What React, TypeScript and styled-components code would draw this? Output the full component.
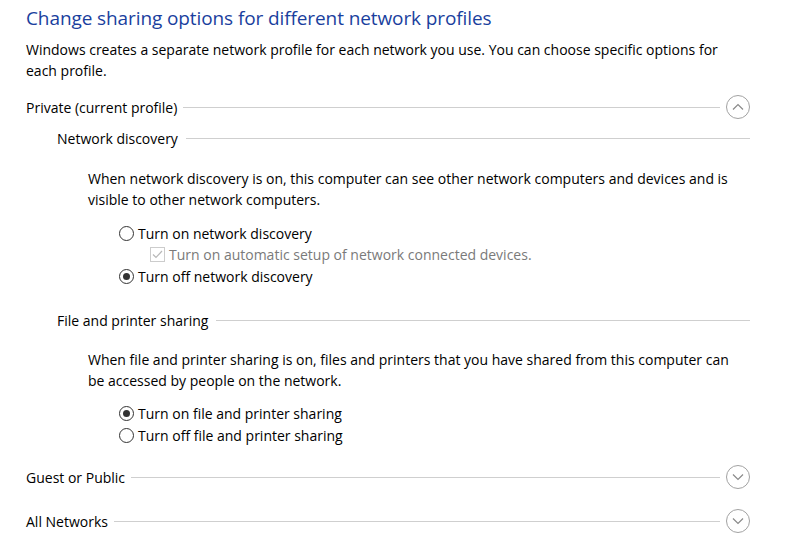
import React, { useState } from "react";
import styled, { createGlobalStyle } from "styled-components";

const GlobalStyle = createGlobalStyle`
  html, body {
    margin: 0;
    padding: 0;
    background: #ffffff;
  }
  body {
    font-family: "Open Sans", "Noto Sans", "Liberation Sans", sans-serif;
    color: #000000;
  }
`;

const Page = styled.div`
  width: 810px;
  height: 556px;
  box-sizing: border-box;
  padding: 5px 60px 0 26px;
  overflow: hidden;
`;

const Title = styled.h1`
  margin: 0;
  font-size: 19px;
  font-weight: 400;
  line-height: 26px;
  color: #1a3f9e;
  letter-spacing: -0.1px;
`;

const Paragraph = styled.p<{ $indent?: number; $top?: number; $width?: number }>`
  margin: ${(p) => p.$top ?? 8}px 0 0 ${(p) => p.$indent ?? 0}px;
  font-size: 14px;
  line-height: 21px;
  max-width: ${(p) => p.$width ?? 710}px;
`;

const HeaderRow = styled.div<{ $top: number }>`
  display: flex;
  align-items: center;
  gap: 6px;
  height: 24px;
  margin-top: ${(p) => p.$top}px;
  font-size: 14px;
`;

const SubHeaderRow = styled.div<{ $top: number }>`
  display: flex;
  align-items: center;
  gap: 8px;
  height: 21px;
  margin: ${(p) => p.$top}px 0 0 31px;
  font-size: 14px;
`;

const Rule = styled.div`
  flex: 1;
  height: 1px;
  background: #cfcfcf;
`;

const Toggle = styled.button`
  width: 24px;
  height: 24px;
  padding: 0;
  border: 1px solid #a2a2a2;
  border-radius: 50%;
  background: #ffffff;
  display: flex;
  align-items: center;
  justify-content: center;
  cursor: pointer;
`;

const Options = styled.div<{ $top: number }>`
  display: flex;
  flex-direction: column;
  margin: ${(p) => p.$top}px 0 0 93px;
`;

const OptionRow = styled.label<{ $indent?: number; $disabled?: boolean; $h?: number }>`
  display: flex;
  align-items: center;
  gap: 4px;
  height: ${(p) => p.$h ?? 22}px;
  margin-left: ${(p) => p.$indent ?? 0}px;
  font-size: 14px;
  color: ${(p) => (p.$disabled ? "#7a7a7a" : "#000000")};
`;

const RadioCircle = styled.span<{ $checked: boolean }>`
  width: 13px;
  height: 13px;
  border: 1px solid #333333;
  border-radius: 50%;
  display: flex;
  align-items: center;
  justify-content: center;
  flex-shrink: 0;
  &::after {
    content: "";
    width: 7px;
    height: 7px;
    border-radius: 50%;
    background: ${(p) => (p.$checked ? "#333333" : "transparent")};
  }
`;

const CheckBox = styled.span`
  width: 13px;
  height: 13px;
  border: 1px solid #cccccc;
  display: flex;
  align-items: center;
  justify-content: center;
  flex-shrink: 0;
`;

const Chevron = ({ up }: { up: boolean }) => (
  <svg width="12" height="8" viewBox="0 0 12 8">
    <path
      d={up ? "M1 6.5 L6 1.5 L11 6.5" : "M1 1.5 L6 6.5 L11 1.5"}
      fill="none"
      stroke="#8a8a8a"
      strokeWidth="1.2"
    />
  </svg>
);

function Radio(props: { label: string; checked: boolean; onSelect: () => void }) {
  return (
    <OptionRow onClick={props.onSelect}>
      <RadioCircle $checked={props.checked} />
      {props.label}
    </OptionRow>
  );
}

export default function App() {
  const [discovery, setDiscovery] = useState("off");
  const [sharing, setSharing] = useState("on");
  const [open, setOpen] = useState({ private: true, guest: false, all: false });

  return (
    <Page>
      <GlobalStyle />
      <Title>Change sharing options for different network profiles</Title>
      <Paragraph>
        Windows creates a separate network profile for each network you use. You can choose specific options for
        each profile.
      </Paragraph>

      <HeaderRow $top={14}>
        Private (current profile)
        <Rule />
        <Toggle onClick={() => setOpen({ ...open, private: !open.private })}>
          <Chevron up={open.private} />
        </Toggle>
      </HeaderRow>

      <SubHeaderRow $top={9}>
        Network discovery
        <Rule />
      </SubHeaderRow>
      <Paragraph $indent={62} $top={19} $width={648}>
        When network discovery is on, this computer can see other network computers and devices and is
        visible to other network computers.
      </Paragraph>
      <Options $top={12}>
        <Radio label="Turn on network discovery" checked={discovery === "on"} onSelect={() => setDiscovery("on")} />
        <OptionRow $indent={31} $disabled $h={21}>
          <CheckBox>
            <svg width="11" height="9" viewBox="0 0 11 9">
              <path d="M1 4.5 L4 7.5 L10 1" fill="none" stroke="#b8b8b8" strokeWidth="1.2" />
            </svg>
          </CheckBox>
          Turn on automatic setup of network connected devices.
        </OptionRow>
        <Radio label="Turn off network discovery" checked={discovery === "off"} onSelect={() => setDiscovery("off")} />
      </Options>

      <SubHeaderRow $top={23}>
        File and printer sharing
        <Rule />
      </SubHeaderRow>
      <Paragraph $indent={62} $top={18} $width={648}>
        When file and printer sharing is on, files and printers that you have shared from this computer can
        be accessed by people on the network.
      </Paragraph>
      <Options $top={11}>
        <Radio label="Turn on file and printer sharing" checked={sharing === "on"} onSelect={() => setSharing("on")} />
        <Radio label="Turn off file and printer sharing" checked={sharing === "off"} onSelect={() => setSharing("off")} />
      </Options>

      <HeaderRow $top={19}>
        Guest or Public
        <Rule />
        <Toggle onClick={() => setOpen({ ...open, guest: !open.guest })}>
          <Chevron up={open.guest} />
        </Toggle>
      </HeaderRow>

      <HeaderRow $top={20}>
        All Networks
        <Rule />
        <Toggle onClick={() => setOpen({ ...open, all: !open.all })}>
          <Chevron up={open.all} />
        </Toggle>
      </HeaderRow>
    </Page>
  );
}
